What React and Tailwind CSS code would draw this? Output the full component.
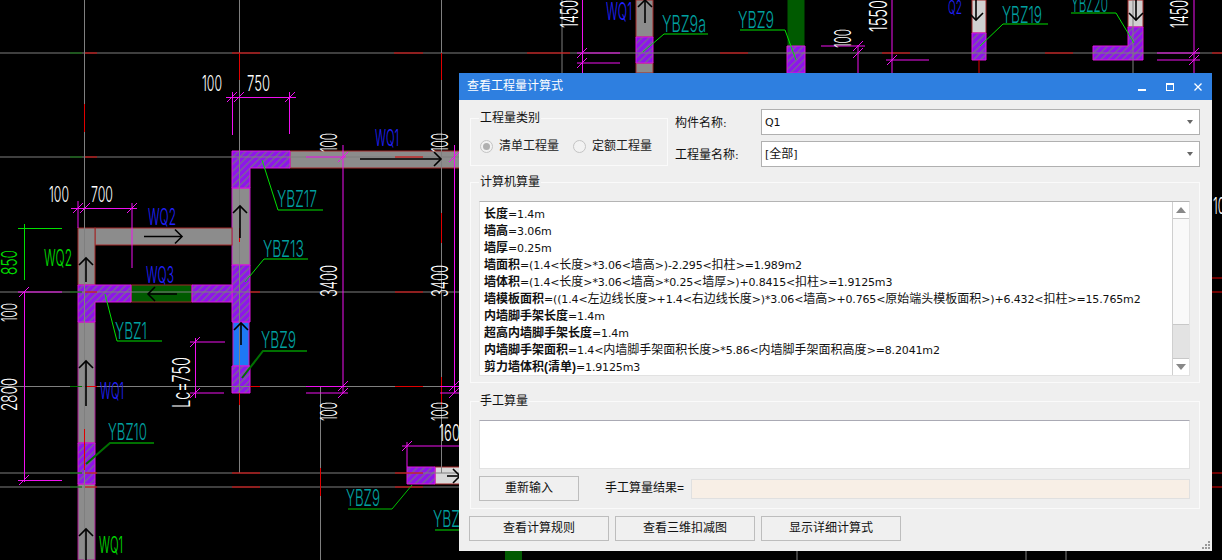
import React from "react";

const CAD_FONT = "Inter";

// lines in page coordinates: [x1, y1, x2, y2]
const gridLines = [
  [0, 53, 1222, 53],
  [0, 157, 460, 157],
  [0, 292, 460, 292],
  [0, 386.5, 460, 386.5],
  [0, 473, 460, 473],
  [0, 487, 460, 487],
  [84.5, 0, 84.5, 560],
  [239.5, 0, 239.5, 473],
  [441.5, 0, 441.5, 473],
  [320.5, 387, 320.5, 560],
  [562, 0, 562, 73],
  [1133, 0, 1133, 73],
  [797, 551, 797, 560],
  [1026, 551, 1026, 560],
  [1066, 551, 1066, 560],
];

const redLines = [
  [85, 53, 97, 53], [232, 53, 260, 53], [394, 53, 423, 53],
  [85, 157, 97, 157], [395, 157, 423, 157],
  [85, 292, 97, 292], [250, 292, 260, 292], [395, 292, 423, 292],
  [85, 386.5, 97, 386.5], [250, 386.5, 260, 386.5], [395, 386.5, 423, 386.5],
  [85, 473, 97, 473], [232, 473, 260, 473], [395, 473, 423, 473],
  [85, 487, 97, 487], [232, 487, 260, 487], [395, 487, 423, 487],
  [84.5, 104, 84.5, 132], [239.5, 53, 239.5, 80], [441.5, 53, 441.5, 80],
  [441.5, 213, 441.5, 243], [441.5, 377, 441.5, 405], [239.5, 393, 239.5, 405],
  [320.5, 468, 320.5, 496], [84.5, 429, 84.5, 470], [239.5, 228, 239.5, 242],
  [527, 53, 570, 53], [720, 53, 748, 53], [882, 53, 910, 53], [1045, 53, 1073, 53], [1212, 53, 1222, 53],
  [979, 60, 979, 73],
  [1212, 278, 1222, 278], [1212, 292, 1222, 292], [1212, 473, 1222, 473], [1212, 487, 1222, 487],
];

const greenDashes = [
  [70, 53, 82, 53], [70, 157, 82, 157], [70, 292, 82, 292],
  [70, 386.5, 82, 386.5], [70, 473, 82, 473], [70, 487, 82, 487],
];

const dimLines = [
  [226, 97.5, 296, 97.5], [232.5, 92, 232.5, 135], [289.5, 92, 289.5, 134],
  [71, 208.5, 137, 208.5], [132, 203, 132, 268], [78, 201, 78, 228],
  [24.5, 292, 24.5, 482], [18, 292, 62, 292], [18, 480.5, 62, 480.5],
  [190, 342, 225, 342], [190, 393, 224, 393], [195.5, 338, 195.5, 398],
  [343, 145, 343, 393], [454.5, 145, 454.5, 393],
  [306, 157, 346, 157], [306, 386.5, 346, 386.5], [306, 393, 348, 393],
  [440, 386.5, 460, 386.5], [440, 393, 460, 393],
  [402, 446, 460, 446], [407, 442, 407, 467],
  [582.5, 0, 582.5, 73], [577, 53, 620, 53], [577, 63, 620, 63],
  [858, 45, 858, 73], [892, 0, 892, 73], [821, 46, 865, 46], [886, 60, 929, 60],
  [1194, 0, 1194, 73], [1157, 53, 1200, 53], [1157, 60, 1200, 60],
];

const ticks = [
  [232, 97], [239, 97], [290, 97], [78, 208], [85, 208], [132, 208],
  [24, 480], [24, 292], [195, 342], [195, 393], [343, 157], [343, 386], [343, 393],
  [454, 157], [454, 386], [454, 393], [407, 446], [582, 53], [582, 63],
  [858, 46], [858, 53], [892, 60], [1194, 53], [1194, 60],
];

// wall pieces: [x, y, w, h, fill, edge]
const walls = [
  [290, 151, 170, 17, "#8c8c8c", "#a02828"],
  [232, 188, 18, 77, "#8c8c8c", "#c818c8"],
  [95, 228, 137, 17, "#8c8c8c", "#a02828"],
  [78, 228, 17, 57, "#8c8c8c", "#a02828"],
  [78, 322, 17, 121, "#8c8c8c", "#a81890"],
  [78, 484, 17, 76, "#8c8c8c", "#a81890"],
  [131, 285, 61, 17, "#005a00", "#a02828"],
  [233, 322, 16, 44, "#1e78f5", "#c818c8"],
  [435, 467, 25, 17, "#d8d8d8", "#a02828"],
  [636, 0, 17, 37, "#8c8c8c", "#a02828"],
  [636, 63, 17, 10, "#8c8c8c", "#a02828"],
  [788, 0, 16, 46, "#005a00", "#005a00"],
  [972, 0, 14, 33, "#d0d0d0", "#a02828"],
  [1128, 0, 15, 27, "#d0d0d0", "#a02828"],
];

const hatched = [
  "M232 151H290V168H250V188H232Z",
  "M232 265H250V322H232Z",
  "M232 366H250V393H232Z",
  "M78 285H131V302H95V322H78Z",
  "M192 285H232V302H192Z",
  "M78 443H95V484H78Z",
  "M407 467H435V484H407Z",
  "M636 37H653V63H636Z",
  "M787 46H805V73H787Z",
  "M972 33H986V60H972Z",
  "M1128 27H1143V60H1093V46H1128Z",
];

const leaders = [
  ["262,160 278,210 323,210", "#00e000", 1],
  ["245,282 264,259 308,259", "#00e000", 1],
  ["105,294 117,341 162,341", "#00e000", 1],
  ["242,378 263,351 307,351", "#007000", 2],
  ["86,464 110,443 154,443", "#007000", 2],
  ["412,485 392,509 348,509", "#00c000", 1],
  ["435,530 460,530", "#00e000", 1],
  ["643,52 664,34 708,34", "#00e000", 1],
  ["740,30 785,30 796,60", "#00e000", 1],
  ["980,46 1003,24 1048,24", "#00e000", 1],
  ["1071,13 1116,13 1134,43", "#00e000", 1],
];

// arrows: [x1, y1, x2, y2]
const arrows = [
  [360, 159, 441, 159], [144, 236.5, 182, 236.5], [240, 238, 240, 206], [86, 282, 86, 258],
  [177, 294, 148, 294], [241, 345, 241, 323], [86, 406, 86, 361], [86, 560, 86, 529],
  [645, 23, 645, 0], [976, 0, 976, 20], [1136, 0, 1136, 20], [447, 476, 460, 476],
];

// labels: [text, x, y, w, h, colour, rotated]
const labels = [
  ["100", 202, 75, 20, 16, "#fff"], ["750", 247, 75, 23, 16, "#fff"],
  ["100", 49, 186, 20, 16, "#fff"], ["700", 91, 186, 22, 16, "#fff"],
  ["850", 1, 250, 16, 25, "#00e000", true], ["100", 1, 303, 16, 19, "#fff", true],
  ["2800", 1, 378, 16, 33, "#fff", true],
  ["WQ2", 44, 249, 28, 17, "#00e000"], ["WQ2", 148, 208, 28, 17, "#2020ff"],
  ["WQ3", 146, 266, 28, 17, "#2020ff"], ["WQ1", 375, 129, 24, 17, "#2020ff"],
  ["WQ1", 100, 382, 24, 17, "#2020ff"], ["WQ1", 99, 536, 24, 17, "#00e000"],
  ["YBZ17", 277, 190, 40, 17, "#00a0a0"], ["YBZ13", 263, 240, 41, 17, "#00a0a0"],
  ["YBZ1", 115, 322, 32, 17, "#00a0a0"], ["YBZ9", 261, 331, 35, 17, "#00a0a0"],
  ["YBZ10", 108, 423, 39, 17, "#00a0a0"], ["YBZ9", 346, 489, 34, 17, "#00a0a0"],
  ["YBZ", 433, 510, 27, 17, "#00a0a0"],
  ["Lc=750", 172, 357, 18, 51, "#fff", true],
  ["100", 320, 133, 17, 19, "#fff", true], ["100", 431, 133, 17, 19, "#fff", true],
  ["3400", 320, 265, 17, 32, "#fff", true], ["3400", 431, 265, 17, 32, "#fff", true],
  ["100", 320, 402, 17, 19, "#fff", true], ["100", 431, 402, 17, 19, "#fff", true],
  ["160", 439, 424, 21, 17, "#fff"],
  ["1450", 560, 0, 18, 28, "#fff", true], ["WQ1", 606, 2, 26, 18, "#2020ff"],
  ["YBZ9a", 662, 15, 44, 17, "#00a0a0"], ["YBZ9", 738, 11, 36, 17, "#00a0a0"],
  ["100", 834, 29, 17, 19, "#fff", true], ["1550", 869, 0, 18, 32, "#fff", true],
  ["Q2", 948, 0, 14, 14, "#2020ff"], ["YBZ19", 1002, 6, 40, 17, "#00a0a0"],
  ["YBZ20", 1071, -5, 37, 17, "#00a0a0"], ["1450", 1170, 0, 18, 28, "#fff", true],
  ["10", 1213, 197, 12, 17, "#fff"],
];

function CadLabel({ text, x, y, w, h, color, rotated }) {
  if (rotated) {
    return (
      <text
        transform={`translate(${x + w} ${y + h}) rotate(-90)`}
        fontFamily={CAD_FONT}
        fontSize={w * 1.38}
        fontWeight="300"
        fill={color}
        textLength={h}
        lengthAdjust="spacingAndGlyphs"
      >
        {text}
      </text>
    );
  }
  return (
    <text
      x={x}
      y={y + h}
      fontFamily={CAD_FONT}
      fontSize={h * 1.38}
      fontWeight="300"
      fill={color}
      textLength={w}
      lengthAdjust="spacingAndGlyphs"
    >
      {text}
    </text>
  );
}

function Arrow({ a }) {
  const [x1, y1, x2, y2] = a;
  const d = Math.hypot(x2 - x1, y2 - y1);
  const ux = (x2 - x1) / d;
  const uy = (y2 - y1) / d;
  const s = 7;
  const p1 = `${x2 - ux * s - uy * s},${y2 - uy * s + ux * s}`;
  const p2 = `${x2 - ux * s + uy * s},${y2 - uy * s - ux * s}`;
  return (
    <g stroke="#000" fill="none" strokeWidth="1.6">
      <line x1={x1} y1={y1} x2={x2} y2={y2} />
      <polyline points={`${p1} ${x2},${y2} ${p2}`} />
    </g>
  );
}

function CadDrawing() {
  return (
    <svg className="block" width="1222" height="560" viewBox="0 0 1222 560">
      <defs>
        <pattern id="hatch" width="5" height="5" patternUnits="userSpaceOnUse" patternTransform="rotate(-45)">
          <rect width="5" height="5" fill="#8f14ec" />
          <rect width="5" height="1.3" fill="#78688f" />
        </pattern>
      </defs>
      {walls.map(([x, y, w, h, fill, edge], i) => (
        <rect key={i} x={x} y={y} width={w} height={h} fill={fill} stroke={edge} strokeWidth="1" />
      ))}
      {hatched.map((d, i) => (
        <path key={i} d={d} fill="url(#hatch)" stroke="#e010e0" strokeWidth="1" />
      ))}
      {gridLines.map(([x1, y1, x2, y2], i) => (
        <line key={i} x1={x1} y1={y1} x2={x2} y2={y2} stroke="#7f7f7f" strokeWidth="1" />
      ))}
      {redLines.map(([x1, y1, x2, y2], i) => (
        <line key={i} x1={x1} y1={y1} x2={x2} y2={y2} stroke="#e00000" strokeWidth="1" />
      ))}
      {greenDashes.map(([x1, y1, x2, y2], i) => (
        <line key={i} x1={x1} y1={y1} x2={x2} y2={y2} stroke="#007000" strokeWidth="1" />
      ))}
      {dimLines.map(([x1, y1, x2, y2], i) => (
        <line key={i} x1={x1} y1={y1} x2={x2} y2={y2} stroke="#f010f0" strokeWidth="1" />
      ))}
      {ticks.map(([x, y], i) => (
        <line key={i} x1={x - 5} y1={y + 5} x2={x + 5} y2={y - 5} stroke="#f010f0" strokeWidth="1" />
      ))}
      {leaders.map(([points, color, sw], i) => (
        <polyline key={i} points={points} fill="none" stroke={color} strokeWidth={sw} />
      ))}
      {arrows.map((a, i) => (
        <Arrow key={i} a={a} />
      ))}
      <rect x="505" y="551" width="17" height="9" fill="#005a00" />
      <line x1="24.5" y1="224" x2="24.5" y2="280" stroke="#00e000" />
      <line x1="18" y1="228.5" x2="62" y2="228.5" stroke="#00e000" />
      {labels.map(([text, x, y, w, h, color, rotated], i) => (
        <CadLabel key={i} text={text} x={x} y={y} w={w} h={h} color={color} rotated={rotated} />
      ))}
    </svg>
  );
}

// latin runs are Tahoma-like (DejaVu at 11px), CJK stays at 12px
function Mixed({ text }) {
  return text.split(/([\x00-\x7f]+)/).map((run, i) =>
    i % 2 === 1 ? (
      <span key={i} className="text-[11px] tracking-[-0.15px]" style={{ fontFamily: '"DejaVu Sans", sans-serif' }}>
        {run}
      </span>
    ) : (
      run
    ),
  );
}

function Group({ title, className, children }) {
  return (
    <div className={`relative border border-[#fafafa] ${className}`}>
      <span className="absolute left-[8px] top-[-10px] px-px bg-[#efefef] leading-[18px] text-[#111]">
        {title}
      </span>
      {children}
    </div>
  );
}

function Radio({ label, checked }) {
  return (
    <div className="flex items-center gap-[6px]">
      <span className="w-[13px] h-[13px] rounded-full border border-[#c4c4c4] bg-[#f2f2f2] flex items-center justify-center">
        {checked && <span className="w-[7px] h-[7px] rounded-full bg-[#b0b0b0]" />}
      </span>
      <span className="text-[#222]">{label}</span>
    </div>
  );
}

function SelectBox({ label, value }) {
  return (
    <div className="flex items-center h-[26px]">
      <span className="w-[86px] pt-[3px] text-[#111]">
        <Mixed text={label} />
      </span>
      <div className="w-[439px] h-[26px] bg-white border border-[#b0b0b0] flex items-center justify-between pl-[3px] pr-[6px]">
        <span className="pt-px text-[#111]">
          <Mixed text={value} />
        </span>
        <span className="w-0 h-0 border-x-[3px] border-x-transparent border-t-[4px] border-t-[#666]" />
      </div>
    </div>
  );
}

function ActionButton({ children, className }) {
  return (
    <button className={`h-[25px] bg-[#f0f0f0] border border-[#bdbdbd] text-[#111] ${className}`}>
      {children}
    </button>
  );
}

const formulaLines = [
  ["长度", "=1.4m"],
  ["墙高", "=3.06m"],
  ["墙厚", "=0.25m"],
  ["墙面积", "=(1.4<长度>*3.06<墙高>)-2.295<扣柱>=1.989m2"],
  ["墙体积", "=(1.4<长度>*3.06<墙高>*0.25<墙厚>)+0.8415<扣柱>=1.9125m3"],
  ["墙模板面积", "=((1.4<左边线长度>+1.4<右边线长度>)*3.06<墙高>+0.765<原始端头模板面积>)+6.432<扣柱>=15.765m2"],
  ["内墙脚手架长度", "=1.4m"],
  ["超高内墙脚手架长度", "=1.4m"],
  ["内墙脚手架面积", "=1.4<内墙脚手架面积长度>*5.86<内墙脚手架面积高度>=8.2041m2"],
  ["剪力墙体积(清单)", "=1.9125m3"],
];

function Dialog() {
  return (
    <div
      className="absolute left-[459px] top-[73px] w-[753px] h-[478px] flex flex-col bg-[#efefef] text-[12px] leading-[17px]"
      style={{ fontFamily: '"Liberation Sans", "Noto Sans CJK SC", sans-serif' }}
    >
      {/* title bar */}
      <div className="h-[27px] shrink-0 bg-[#2e7fe0] flex items-center justify-between pl-[8px] pr-[9px] text-white">
        <span>查看工程量计算式</span>
        <div className="flex items-center gap-[18px]">
          <svg width="10" height="10" viewBox="0 0 10 10"><rect x="1" y="7" width="8" height="2" fill="#fff" /></svg>
          <svg width="10" height="10" viewBox="0 0 10 10"><rect x="1.5" y="1.5" width="7" height="7" fill="none" stroke="#fff" /><rect x="1" y="1" width="8" height="2" fill="#fff" /></svg>
          <svg width="10" height="10" viewBox="0 0 10 10"><path d="M1.5 1.5L8.5 8.5M8.5 1.5L1.5 8.5" stroke="#fff" strokeWidth="1.3" /></svg>
        </div>
      </div>

      <div className="relative flex-1 pl-[11px] pt-[9px]">
        {/* top row */}
        <div className="flex items-start">
          <Group title="工程量类别" className="mt-[9px] w-[198px] h-[48px] flex items-center gap-[14px] pl-[9px] pt-[8px]">
            <Radio label="清单工程量" checked />
            <Radio label="定额工程量" />
          </Group>
          <div className="ml-[7px] flex flex-col gap-[6px]">
            <SelectBox label="构件名称:" value="Q1" />
            <SelectBox label="工程量名称:" value="[全部]" />
          </div>
        </div>

        {/* calculated quantities */}
        <Group title="计算机算量" className="mt-[15px] w-[730px] h-[201px] pl-[8px] pt-[18px]">
          <div className="w-[711px] h-[175px] flex bg-white border border-[#e2e2e2] border-t-[#b4b4b4]">
            <div className="flex-1 pl-[4px] pt-[4px] text-[#111] whitespace-nowrap overflow-hidden">
              {formulaLines.map(([name, rest]) => (
                <div key={name} className="h-[17px]">
                  <span className="font-bold">{name}</span>
                  <Mixed text={rest} />
                </div>
              ))}
            </div>
            <div className="w-[17px] flex flex-col bg-[#e3e3e3] border-l border-[#cfcfcf]">
              <div className="h-[17px] bg-white border-b border-[#c8c8c8] flex items-center justify-center">
                <span className="w-0 h-0 border-x-[5px] border-x-transparent border-b-[6px] border-b-[#888]" />
              </div>
              <div className="h-[106px] bg-[#f9f9f9] border-b border-[#c8c8c8]" />
              <div className="flex-1" />
              <div className="h-[17px] bg-white border-t border-[#c8c8c8] flex items-center justify-center">
                <span className="w-0 h-0 border-x-[5px] border-x-transparent border-t-[6px] border-t-[#888]" />
              </div>
            </div>
          </div>
        </Group>

        {/* manual quantities */}
        <Group title="手工算量" className="mt-[18px] w-[730px] h-[108px] pl-[8px] pt-[18px]">
          <div className="w-[711px] h-[49px] bg-white border border-[#e2e2e2] border-t-[#aaaab4]" />
          <div className="mt-[7px] flex items-center">
            <ActionButton className="w-[100px]">重新输入</ActionButton>
            <span className="ml-[26px] w-[86px] text-[#111]">手工算量结果=</span>
            <div className="w-[499px] h-[20px] bg-[#f8efe6] border border-[#e0e0e0]" />
          </div>
        </Group>

        {/* bottom buttons */}
        <div className="mt-[7px] -ml-px flex gap-[6px]">
          <ActionButton className="w-[140px]">查看计算规则</ActionButton>
          <ActionButton className="w-[140px]">查看三维扣减图</ActionButton>
          <ActionButton className="w-[140px]">显示详细计算式</ActionButton>
        </div>

        {/* resize grip */}
        <svg className="absolute right-[2px] bottom-[2px]" width="8" height="8" viewBox="0 0 8 8">
          <path d="M6 0h2v2H6zM3 3h2v2H3zM6 3h2v2H6zM0 6h2v2H0zM3 6h2v2H3zM6 6h2v2H6z" fill="#999" />
        </svg>
      </div>
    </div>
  );
}

export default function App() {
  return (
    <div className="relative w-[1222px] h-[560px] bg-black overflow-hidden">
      <CadDrawing />
      <Dialog />
    </div>
  );
}
